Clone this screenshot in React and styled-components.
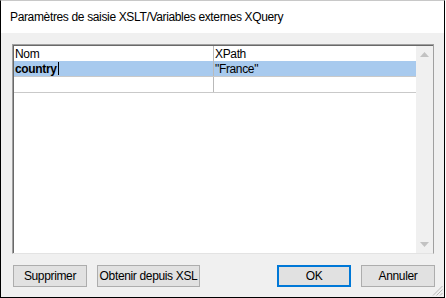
import React from "react";
import styled, { createGlobalStyle } from "styled-components";

const Global = createGlobalStyle`
  html, body { margin: 0; padding: 0; background: #ffffff; }
  * { box-sizing: border-box; }
`;

const Window = styled.div`
  position: relative;
  width: 445px;
  height: 298px;
  display: flex;
  flex-direction: column;
  border-left: 1px solid #000;
  border-right: 1px solid #000;
  border-bottom: 1px solid #000;
  border-top: 1px solid #c8c8c8;
  font-family: "Liberation Sans", Arial, sans-serif;
  font-size: 12px;
  letter-spacing: -0.35px;
  color: #000;
  background: #f0f0f0;
`;

const TitleBar = styled.div`
  height: 32px;
  flex: none;
  display: flex;
  align-items: center;
  padding-left: 9px;
  background: #ffffff;
  font-size: 12px;
`;

const Body = styled.div`
  flex: 1;
  display: flex;
  flex-direction: column;
  padding: 11px 10px 10px 11px;
  gap: 11px;
`;

const ListBox = styled.div`
  height: 210px;
  display: flex;
  border-top: 1px solid #a0a0a0;
  border-left: 1px solid #a0a0a0;
  border-right: 1px solid #a0a0a0;
  border-bottom: 1px solid #e3e3e3;
  box-shadow: inset 1px 1px 0 #696969;
  padding: 1px 0 0 1px;
  background: #fff;
`;

const Grid = styled.div`
  flex: 1;
  display: flex;
  flex-direction: column;
`;

const Row = styled.div`
  display: grid;
  grid-template-columns: 200px 1fr;
  height: ${(p) => (p.$header ? "15px" : "16px")};
  background: ${(p) => (p.$selected ? "#a8caee" : "transparent")};
  border-bottom: ${(p) => (p.$header ? "none" : "1px solid #c9c9c9")};
`;

const Cell = styled.div`
  display: flex;
  align-items: center;
  padding-left: 1px;
  border-right: ${(p) => (p.$first ? "1px solid #b9b9b9" : "none")};
  font-weight: ${(p) => (p.$bold ? "bold" : "normal")};
  white-space: nowrap;
  overflow: hidden;
`;

const Caret = styled.span`
  display: inline-block;
  width: 1px;
  height: 13px;
  background: #000;
  margin-left: 1px;
`;

const ScrollBar = styled.div`
  width: 17px;
  flex: none;
  display: flex;
  flex-direction: column;
  justify-content: space-between;
  background: #f0f0f0;
`;

const ArrowBox = styled.div`
  height: 17px;
  display: flex;
  align-items: center;
  justify-content: center;
`;

const ButtonRow = styled.div`
  display: flex;
  align-items: center;
  padding-left: 1px;
`;

const Button = styled.button`
  width: ${(p) => p.$w || 74}px;
  height: 22px;
  flex: none;
  margin-left: ${(p) => p.$ml || 0}px;
  background: #e1e1e1;
  border: ${(p) => (p.$default ? "2px solid #0078d7" : "1px solid #adadad")};
  font-family: "Liberation Sans", Arial, sans-serif;
  font-size: 12px;
  letter-spacing: -0.35px;
  white-space: nowrap;
  color: #000;
  padding: 0;
  display: flex;
  align-items: center;
  justify-content: center;
`;

const Grip = styled.svg`
  position: absolute;
  right: 1px;
  bottom: 1px;
`;

const Arrow = ({ up }) => (
  <svg width="9" height="5" viewBox="0 0 9 5">
    <polygon points={up ? "0,5 9,5 4.5,0" : "0,0 9,0 4.5,5"} fill="#c2c2c2" />
  </svg>
);

export default function App() {
  return (
    <>
      <Global />
      <Window>
        <TitleBar>Paramètres de saisie XSLT/Variables externes XQuery</TitleBar>
        <Body>
          <ListBox>
            <Grid>
              <Row $header>
                <Cell $first>Nom</Cell>
                <Cell>XPath</Cell>
              </Row>
              <Row $selected>
                <Cell $first $bold>
                  country
                  <Caret />
                </Cell>
                <Cell>"France"</Cell>
              </Row>
              <Row>
                <Cell $first />
                <Cell />
              </Row>
            </Grid>
            <ScrollBar>
              <ArrowBox>
                <Arrow up />
              </ArrowBox>
              <ArrowBox>
                <Arrow />
              </ArrowBox>
            </ScrollBar>
          </ListBox>
          <ButtonRow>
            <Button>Supprimer</Button>
            <Button $w={103} $ml={10}>Obtenir depuis XSL</Button>
            <Button $default $ml={77}>OK</Button>
            <Button $ml={10}>Annuler</Button>
          </ButtonRow>
        </Body>
        <Grip width="11" height="11" viewBox="0 0 11 11">
          <line x1="10.5" y1="1" x2="1" y2="10.5" stroke="#b8b8b8" strokeWidth="1" />
          <line x1="10.5" y1="4.5" x2="4.5" y2="10.5" stroke="#b8b8b8" strokeWidth="1" />
          <line x1="10.5" y1="8" x2="8" y2="10.5" stroke="#b8b8b8" strokeWidth="1" />
        </Grip>
      </Window>
    </>
  );
}
